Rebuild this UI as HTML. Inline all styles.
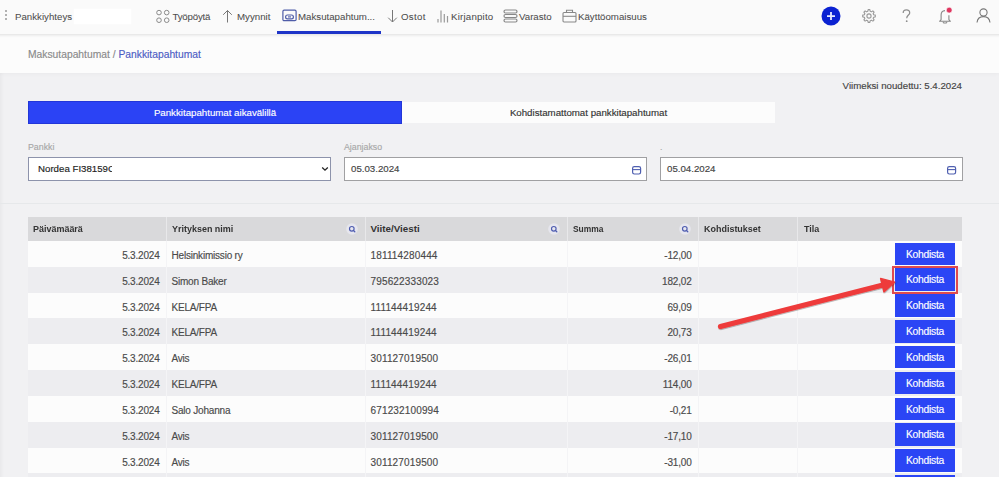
<!DOCTYPE html>
<html><head><meta charset="utf-8">
<style>
*{box-sizing:border-box;margin:0;padding:0}
html,body{width:999px;height:477px;overflow:hidden}
body{-webkit-text-stroke:0.15px currentColor;font-family:"Liberation Sans",sans-serif;background:#f1f1f3;position:relative;color:#444}
.abs{position:absolute}
#hdr{left:0;top:0;width:999px;height:34px;background:#fafafa;z-index:2}
#hsh{left:-20px;top:0;width:1039px;height:34px;background:#fafafa;box-shadow:0 1px 3px rgba(0,0,0,0.12);z-index:2}
.nt{-webkit-text-stroke:0.05px currentColor;position:absolute;top:10.5px;font-size:9.7px;line-height:12px;color:#4d4d4d;white-space:nowrap}
#crumb{left:0;top:34px;width:999px;height:39px;background:#fcfcfc;box-shadow:0 1px 4px rgba(0,0,0,0.035);z-index:1}
.crumbt{z-index:3;position:absolute;left:28px;top:48.5px;font-size:10.3px;line-height:12px;color:#8a8a8a;white-space:nowrap}
.crumbt b{font-weight:400;color:#4d5cc4}

#last{right:37px;top:80px;font-size:9.7px;line-height:12px;color:#444;white-space:nowrap}
.tab{position:absolute;top:101px;height:23px;font-size:9.7px;line-height:23px;text-align:center;white-space:nowrap}
.lbl{position:absolute;top:142px;font-size:8.8px;line-height:11px;color:#a8a8a8;white-space:nowrap}
.inp{position:absolute;top:157px;width:303px;height:24px;background:#fff;border:1px solid #a0a0a2;font-size:9.7px;line-height:22px;color:#444;padding-left:6px;white-space:nowrap}
#sep{left:0;top:203px;width:999px;height:1px;background:#e6e8ea}
table{position:absolute;left:28px;top:217px;border-collapse:collapse;table-layout:fixed;width:934px}
th{-webkit-text-stroke:0;height:24px;background:#d9d9db;font-weight:700;font-size:9.8px;color:#333;text-align:left;padding:0 0 2px 5px;border-right:1px solid #e8e8ea;position:relative;white-space:nowrap}
td{height:25.83px;font-size:10px;letter-spacing:-0.2px;color:#4a4a4a;padding:3px 5px 0;border-right:1px solid #f4f4f6;white-space:nowrap}
tr.w td{background:#fcfcfc}
tr.g td{background:#ededf0}
td.r{text-align:right;padding-right:6px}
th:last-child,td:last-child{border-right:none}
.btn{position:absolute;width:60px;height:22.6px;background:#2b45f5;color:#fff;font-size:10.3px;letter-spacing:-0.25px;line-height:23px;text-align:center}
.ht{display:inline-block;transform:scaleX(0.915);transform-origin:0 50%}
.sq{position:absolute;right:5.5px;top:4.5px}
</style></head><body>
<div id="hsh" class="abs"></div>
<div id="hdr" class="abs">
  <!-- dots -->
  <div class="abs" style="left:5px;top:10px;width:2px;height:2px;background:#999;border-radius:1px"></div>
  <div class="abs" style="left:5px;top:14px;width:2px;height:2px;background:#999;border-radius:1px"></div>
  <div class="abs" style="left:5px;top:18px;width:2px;height:2px;background:#999;border-radius:1px"></div>
  <div class="nt" style="left:15px">Pankkiyhteys</div>
  <div class="abs" style="left:74px;top:9px;width:57px;height:15px;background:#fff;box-shadow:0 0 2px #fff"></div>
  <!-- Työpöytä icon -->
  <svg class="abs" style="left:155px;top:9px" width="16" height="15" viewBox="0 0 16 15">
    <g fill="none" stroke="#8a8a8a" stroke-width="1"><circle cx="4" cy="3.6" r="2.3"/><circle cx="11.7" cy="3.6" r="2.3"/><circle cx="4" cy="11.2" r="2.3"/><circle cx="11.7" cy="11.2" r="2.3"/></g>
  </svg>
  <div class="nt" style="left:172.5px;letter-spacing:-0.2px">Työpöytä</div>
  <svg class="abs" style="left:222px;top:9px" width="11" height="14" viewBox="0 0 11 14">
    <path d="M5.5 1.5V13.5M1.2 5.8L5.5 1.5L9.8 5.8" fill="none" stroke="#777" stroke-width="1"/>
  </svg>
  <div class="nt" style="left:237px">Myynnit</div>
  <svg class="abs" style="left:282px;top:9px" width="15" height="13" viewBox="0 0 15 13">
    <rect x="0.9" y="1.2" width="13.2" height="10.4" rx="1.2" fill="none" stroke="#4f5da8" stroke-width="1.2"/>
    <rect x="3.6" y="6" width="7.8" height="3.8" rx="1.9" fill="none" stroke="#4f5da8" stroke-width="1.2"/>
    <line x1="6" y1="7.9" x2="9" y2="7.9" stroke="#4f5da8" stroke-width="1.1"/>
  </svg>
  <div class="nt" style="left:298px">Maksutapahtum...</div>
  <div class="abs" style="left:277px;top:31px;width:104px;height:3px;background:#1f35c8"></div>
  <svg class="abs" style="left:387px;top:9px" width="11" height="14" viewBox="0 0 11 14">
    <path d="M5.5 1V13M1.2 8.7L5.5 13L9.8 8.7" fill="none" stroke="#777" stroke-width="1"/>
  </svg>
  <div class="nt" style="left:401px;letter-spacing:0.3px">Ostot</div>
  <svg class="abs" style="left:437px;top:9px" width="12" height="14" viewBox="0 0 12 14">
    <g stroke="#999" stroke-width="1.2"><line x1="1" y1="10" x2="1" y2="13.5"/><line x1="4" y1="1.5" x2="4" y2="13.5"/><line x1="7.3" y1="5" x2="7.3" y2="13.5"/><line x1="10.5" y1="7" x2="10.5" y2="13.5"/></g>
  </svg>
  <div class="nt" style="left:451px;letter-spacing:0.2px">Kirjanpito</div>
  <svg class="abs" style="left:503px;top:9px" width="15" height="14" viewBox="0 0 15 14">
    <g fill="none" stroke="#888" stroke-width="1.2"><rect x="1" y="1" width="13" height="3" rx="1.5"/><rect x="1" y="5.5" width="13" height="3" rx="1.5"/><rect x="1" y="10" width="13" height="3" rx="1.5"/></g>
  </svg>
  <div class="nt" style="left:519px">Varasto</div>
  <svg class="abs" style="left:562px;top:9px" width="15" height="14" viewBox="0 0 15 14">
    <g fill="none" stroke="#888" stroke-width="1.1"><rect x="1" y="3.5" width="13" height="9.5" rx="1"/><path d="M4.5 3.5V1.3H10.5V3.5"/><line x1="1" y1="7.3" x2="14" y2="7.3"/></g>
  </svg>
  <div class="nt" style="left:578px">Käyttöomaisuus</div>
  <!-- right icons -->
  <svg class="abs" style="left:821px;top:6px" width="20" height="20" viewBox="0 0 20 20">
    <circle cx="10" cy="10" r="9.5" fill="#0b22d2"/>
    <path d="M10 6.1V14.1M6 10.1H14" stroke="#e8ebff" stroke-width="1.8"/>
  </svg>
  <svg class="abs" style="left:862px;top:9.2px" width="14" height="14" viewBox="0 0 14 14"><path d="M13.34 6.15 L13.34 7.85 L11.64 8.23 L11.15 9.41 L12.09 10.88 L10.88 12.09 L9.41 11.15 L8.23 11.64 L7.85 13.34 L6.15 13.34 L5.77 11.64 L4.59 11.15 L3.12 12.09 L1.91 10.88 L2.85 9.41 L2.36 8.23 L0.66 7.85 L0.66 6.15 L2.36 5.77 L2.85 4.59 L1.91 3.12 L3.12 1.91 L4.59 2.85 L5.77 2.36 L6.15 0.66 L7.85 0.66 L8.23 2.36 L9.41 2.85 L10.88 1.91 L12.09 3.12 L11.15 4.59 L11.64 5.77Z" fill="none" stroke="#9a9a9a" stroke-width="1.1" stroke-linejoin="round"/><circle cx="7" cy="7" r="2.1" fill="none" stroke="#9a9a9a" stroke-width="1.1"/></svg>
  <svg class="abs" style="left:902px;top:9px" width="9" height="14" viewBox="0 0 9 14">
    <path d="M1.2 3.9C1.2 2.1 2.7 0.9 4.4 0.9S7.7 2.1 7.7 3.9C7.7 5.9 4.7 6.3 4.7 9.2" fill="none" stroke="#8e8e8e" stroke-width="1.25"/>
    <circle cx="4.7" cy="12.2" r="0.9" fill="#8e8e8e"/>
  </svg>
  <svg class="abs" style="left:936.5px;top:6px" width="16" height="18" viewBox="0 0 16 18">
    <path d="M8 4.6C5.2 4.6 4.1 6.6 4.1 9V13.6L2.6 15.3H13.4L11.9 13.6V9.2" fill="none" stroke="#888" stroke-width="1.1" stroke-linejoin="round"/>
    <path d="M6.3 15.8V17H9.7V15.8" fill="none" stroke="#888" stroke-width="1"/>
    <circle cx="12.2" cy="4.1" r="2.9" fill="#e0355f" stroke="#fafafa" stroke-width="0.6"/>
  </svg>
  <svg class="abs" style="left:976px;top:8px" width="15" height="15" viewBox="0 0 15 15">
    <circle cx="7.5" cy="4.5" r="3.6" fill="none" stroke="#777" stroke-width="1.1"/>
    <path d="M1 14.5C1.5 10.5 4 8.6 7.5 8.6S13.5 10.5 14 14.5" fill="none" stroke="#777" stroke-width="1.1"/>
  </svg>
</div>

<div id="crumb" class="abs"></div>
<div class="abs" style="left:0;top:73px;width:4px;height:404px;background:linear-gradient(to right,#e9e9eb,#f1f1f3)"></div>
<div class="crumbt">Maksutapahtumat / <b>Pankkitapahtumat</b></div>


<div id="last" class="abs">Viimeksi noudettu: 5.4.2024</div>
<div class="tab" style="left:28px;width:374px;background:#2b43f5;color:#fff;border:1px solid #2236d8;line-height:21px">Pankkitapahtumat aikavälillä</div>
<div class="tab" style="left:402px;top:101.5px;height:21.3px;line-height:21.3px;width:373px;background:#fcfcfc;color:#333">Kohdistamattomat pankkitapahtumat</div>
<div class="lbl" style="left:28px">Pankki</div>
<div class="lbl" style="left:344px">Ajanjakso</div>
<div class="lbl" style="left:660px">.</div>
<div class="inp" style="left:28px;border-color:#8d93ab;color:#222;padding-left:9px">Nordea FI38159C</div>
<div class="abs" style="left:111.5px;top:159px;width:90px;height:20px;background:#fff"></div>
<svg class="abs" style="left:321px;top:166px" width="8" height="6" viewBox="0 0 8 6"><path d="M1.2 1.5L4 4.2L6.8 1.5" fill="none" stroke="#222" stroke-width="1.3"/></svg>
<div class="inp" style="left:344px">05.03.2024</div>
<svg class="abs" style="left:630.5px;top:165px" width="11" height="11" viewBox="0 0 11 11"><rect x="1.6" y="1.6" width="8" height="7.4" rx="1.7" fill="none" stroke="#4f5fb0" stroke-width="1.2"/><line x1="1.6" y1="4.6" x2="9.6" y2="4.6" stroke="#4f5fb0" stroke-width="1.1"/></svg>
<div class="inp" style="left:660px">05.04.2024</div>
<svg class="abs" style="left:945.5px;top:165px" width="11" height="11" viewBox="0 0 11 11"><rect x="1.6" y="1.6" width="8" height="7.4" rx="1.7" fill="none" stroke="#4f5fb0" stroke-width="1.2"/><line x1="1.6" y1="4.6" x2="9.6" y2="4.6" stroke="#4f5fb0" stroke-width="1.1"/></svg>
<div id="sep" class="abs"></div>
<table>
<colgroup><col style="width:138px"><col style="width:199px"><col style="width:202px"><col style="width:131px"><col style="width:99px"><col style="width:165px"></colgroup>
<tr><th><span class="ht">Päivämäärä</span></th><th><span class="ht">Yrityksen nimi</span><svg class="sq" width="14" height="14" viewBox="0 0 14 14"><circle cx="7" cy="7" r="5.8" fill="#e6e6ee"/><circle cx="6.8" cy="6.8" r="2.3" fill="none" stroke="#4f5db0" stroke-width="1.15"/><line x1="8.4" y1="8.4" x2="9.8" y2="9.8" stroke="#4f5db0" stroke-width="1.3" stroke-linecap="round"/></svg></th><th><span class="ht" style="transform:none">Viite/Viesti</span><svg class="sq" width="14" height="14" viewBox="0 0 14 14"><circle cx="7" cy="7" r="5.8" fill="#e6e6ee"/><circle cx="6.8" cy="6.8" r="2.3" fill="none" stroke="#4f5db0" stroke-width="1.15"/><line x1="8.4" y1="8.4" x2="9.8" y2="9.8" stroke="#4f5db0" stroke-width="1.3" stroke-linecap="round"/></svg></th><th><span class="ht" style="transform:scaleX(0.86)">Summa</span><svg class="sq" width="14" height="14" viewBox="0 0 14 14"><circle cx="7" cy="7" r="5.8" fill="#e6e6ee"/><circle cx="6.8" cy="6.8" r="2.3" fill="none" stroke="#4f5db0" stroke-width="1.15"/><line x1="8.4" y1="8.4" x2="9.8" y2="9.8" stroke="#4f5db0" stroke-width="1.3" stroke-linecap="round"/></svg></th><th><span class="ht">Kohdistukset</span></th><th style="padding-left:6px"><span class="ht">Tila</span></th></tr>
<tr class="w"><td class="r">5.3.2024</td><td>Helsinkimissio ry</td><td style="letter-spacing:0.15px">181114280444</td><td class="r">-12,00</td><td></td><td></td></tr>
<tr class="g"><td class="r">5.3.2024</td><td>Simon Baker</td><td style="letter-spacing:0.15px">795622333023</td><td class="r">182,02</td><td></td><td></td></tr>
<tr class="w"><td class="r">5.3.2024</td><td>KELA/FPA</td><td style="letter-spacing:0.15px">111144419244</td><td class="r">69,09</td><td></td><td></td></tr>
<tr class="g"><td class="r">5.3.2024</td><td>KELA/FPA</td><td style="letter-spacing:0.15px">111144419244</td><td class="r">20,73</td><td></td><td></td></tr>
<tr class="w"><td class="r">5.3.2024</td><td>Avis</td><td style="letter-spacing:0.15px">301127019500</td><td class="r">-26,01</td><td></td><td></td></tr>
<tr class="g"><td class="r">5.3.2024</td><td>KELA/FPA</td><td style="letter-spacing:0.15px">111144419244</td><td class="r">114,00</td><td></td><td></td></tr>
<tr class="w"><td class="r">5.3.2024</td><td>Salo Johanna</td><td style="letter-spacing:0.15px">671232100994</td><td class="r">-0,21</td><td></td><td></td></tr>
<tr class="g"><td class="r">5.3.2024</td><td>Avis</td><td style="letter-spacing:0.15px">301127019500</td><td class="r">-17,10</td><td></td><td></td></tr>
<tr class="w"><td class="r">5.3.2024</td><td>Avis</td><td style="letter-spacing:0.15px">301127019500</td><td class="r">-31,00</td><td></td><td></td></tr>
<tr class="g"><td class="r"></td><td></td><td></td><td class="r"></td><td></td><td></td></tr>
</table>

<div class="btn" style="left:895px;top:242.50px">Kohdista</div>
<div class="btn" style="left:895px;top:268.35px">Kohdista</div>
<div class="btn" style="left:895px;top:294.20px">Kohdista</div>
<div class="btn" style="left:895px;top:320.05px">Kohdista</div>
<div class="btn" style="left:895px;top:345.90px">Kohdista</div>
<div class="btn" style="left:895px;top:371.75px">Kohdista</div>
<div class="btn" style="left:895px;top:397.60px">Kohdista</div>
<div class="btn" style="left:895px;top:423.45px">Kohdista</div>
<div class="btn" style="left:895px;top:449.30px">Kohdista</div>
<div class="btn" style="left:895px;top:475.15px">Kohdista</div>
<div class="abs" style="left:892px;top:265.5px;width:66px;height:28px;border:2px solid #e04a4f"></div>
<svg class="abs" style="left:0;top:0" width="999" height="477" viewBox="0 0 999 477">
<defs><filter id="sh" x="-10%" y="-50%" width="120%" height="200%"><feDropShadow dx="0.4" dy="0.8" stdDeviation="0.7" flood-color="#000" flood-opacity="0.35"/></filter></defs>
<g filter="url(#sh)" fill="#ee3b3b">
<line x1="720.5" y1="326.5" x2="884" y2="284.7" stroke="#ee3b3b" stroke-width="5.2" stroke-linecap="round"/>
<path d="M894.8 282L880.5 278.4L883.9 292Z" stroke="#ee3b3b" stroke-width="1.2" stroke-linejoin="round"/>
</g>
</svg>
</body></html>
